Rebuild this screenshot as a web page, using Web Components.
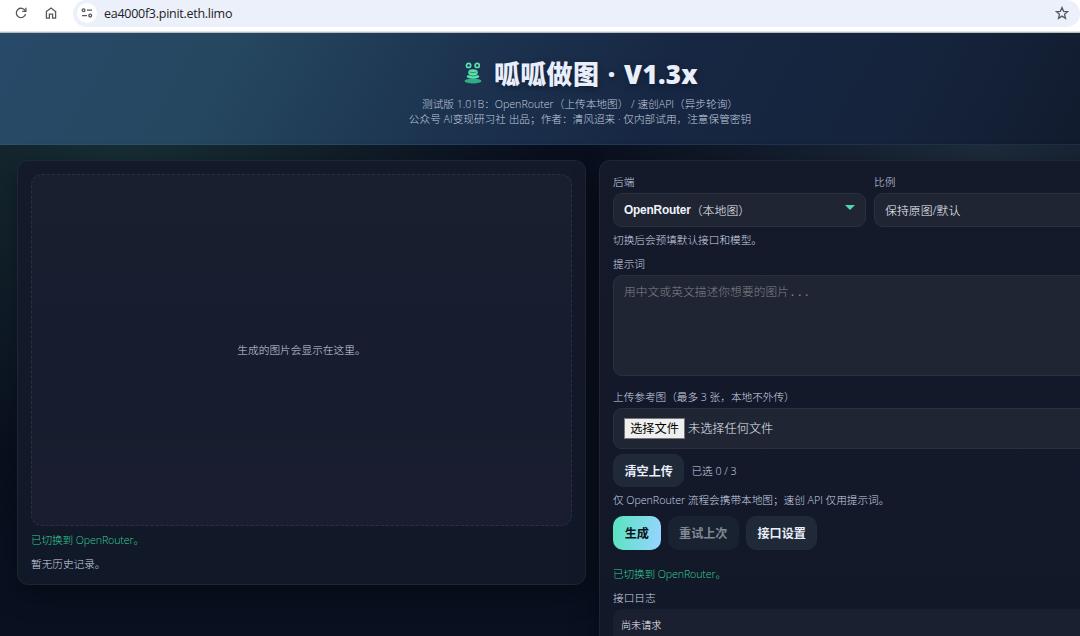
<!DOCTYPE html>
<html lang="zh-CN">
<head>
<meta charset="utf-8">
<title>呱呱做图 · V1.3x</title>
<style>
    html, body {
        margin: 0;
        height: 100%;
        overflow: hidden;
    }
    body {
        display: flex;
        flex-direction: column;
        font-family: "Open Sans", "Noto Sans CJK SC", sans-serif;
        font-size: 10.7px;
        color: #e6edf9;
        background: #080e1c;
    }
    .page {
        flex: 1;
        min-height: 0;
        width: 1160px;
        background:
            radial-gradient(420px 320px at 125px 112px, #172e34 0%, rgba(23, 46, 52, 0) 100%),
            radial-gradient(400px 300px at 985px 112px, #1d2b3b 0%, rgba(29, 43, 59, 0) 100%),
            linear-gradient(180deg, #0a0f1e 0%, #091020 100%);
    }
    main {
        display: grid;
        grid-template-columns: 569px 544px;
        gap: 13px;
        align-items: start;
        padding: 15px 17px;
    }
    .backends {
        display: grid;
        grid-template-columns: 253px 253px;
        gap: 8px;
    }
    .row {
        display: flex;
        align-items: center;
        gap: 7px;
    }
</style>
</head>
<body>
<browser-bar>ea4000f3.pinit.eth.limo</browser-bar>
<div class="page">
    <app-header>
        <span slot="title">呱呱做图 · V1.3x</span>
        <span slot="line1">测试版 1.01B：OpenRouter（上传本地图） / 速创API（异步轮询）</span>
        <span slot="line2">公众号 AI变现研习社 出品；作者：清风迢来 · 仅内部试用，注意保管密钥</span>
    </app-header>
    <main>
        <app-card style="height: 425px">
            <preview-box>生成的图片会显示在这里。</preview-box>
            <text-line tone="ok" style="margin-top: 6px">已切换到 OpenRouter。</text-line>
            <text-line style="margin-top: 8px">暂无历史记录。</text-line>
        </app-card>
        <app-card style="height: 560px">
            <div class="backends">
                <form-field label="后端"><select-box arrow><b>OpenRouter</b>（本地图）</select-box></form-field>
                <form-field label="比例"><select-box>保持原图/默认</select-box></form-field>
            </div>
            <text-line style="margin-top: 5px">切换后会预填默认接口和模型。</text-line>
            <form-field label="提示词" style="margin-top: 8px"><prompt-area>用中文或英文描述你想要的图片...</prompt-area></form-field>
            <form-field label="上传参考图（最多 3 张，本地不外传）" style="margin-top: 13px"><file-picker button="选择文件">未选择任何文件</file-picker></form-field>
            <div class="row" style="margin-top: 5px">
                <app-button style="height: 33px">清空上传</app-button>
                <text-line>已选 0 / 3</text-line>
            </div>
            <text-line style="margin-top: 5px">仅 OpenRouter 流程会携带本地图；速创 API 仅用提示词。</text-line>
            <div class="row" style="margin-top: 8px">
                <app-button kind="primary">生成</app-button>
                <app-button kind="disabled">重试上次</app-button>
                <app-button>接口设置</app-button>
            </div>
            <text-line tone="ok" style="margin-top: 16px">已切换到 OpenRouter。</text-line>
            <form-field label="接口日志" style="margin-top: 8px"><log-box>尚未请求</log-box></form-field>
        </app-card>
    </main>
</div>

<script>
// small helper: every element is a style block plus some markup
function define(name, render) {
    customElements.define(name, class extends HTMLElement {
        constructor() {
            super();
            this.attachShadow({ mode: 'open' });
        }
        connectedCallback() {
            this.shadowRoot.innerHTML = render(this);
        }
    });
}

// browser toolbar
define('browser-bar', () => `
    <style>
        :host {
            display: block;
            flex: none;
            box-sizing: border-box;
            height: 33px;
            background: white;
            border-bottom: 1px solid #b9bcbd;
            box-shadow: inset 0 -1px #e4e5e4;
            color: #1f2124;
        }
        .bar { display: flex; align-items: center; height: 27px; }
        svg { display: block; fill: none; stroke: #55585c; stroke-width: 1.3; }
        .reload { margin: 0 0 2px 14px; }
        .home { margin: 0 0 2px 16px; }
        .address {
            flex: 1;
            display: flex;
            align-items: center;
            box-sizing: border-box;
            height: 27px;
            margin-left: 15px;
            padding: 0 11px 1px 4px;
            border-radius: 14px;
            background: #ecf0fa;
        }
        .site {
            display: grid;
            place-items: center;
            width: 20px;
            height: 20px;
            border-radius: 50%;
            background: white;
        }
        .url { flex: 1; margin-left: 7px; font-size: 12.5px; letter-spacing: -0.27px; }
    </style>
    <div class="bar">
        <svg class="reload" width="14" height="14" viewBox="0 0 14 14"><path d="M11.3 5A4.7 4.7 0 1 0 11.6 8"/><path d="M11.9 1.8v3.6H8.2"/></svg>
        <svg class="home" width="14" height="14" viewBox="0 0 14 14"><path d="M2.4 5.6 7 2l4.6 3.6v6.6H8.6V8.2H5.4v4H2.4z"/></svg>
        <div class="address">
            <div class="site">
                <svg width="12" height="12" viewBox="0 0 12 12"><circle cx="2.6" cy="3.2" r="1.4"/><path d="M6 3.2h5M1 8.6h5"/><circle cx="9.2" cy="8.6" r="1.4"/></svg>
            </div>
            <span class="url"><slot></slot></span>
            <svg width="14" height="14" viewBox="0 0 14 14"><path d="M7 1.6l1.6 3.7 4 .35-3.05 2.65.95 3.95L7 10.1l-3.5 2.15.95-3.95L1.4 5.65l4-.35z"/></svg>
        </div>
    </div>
`);

// page header with the frog
define('app-header', () => `
    <style>
        :host {
            display: flex;
            flex-direction: column;
            align-items: center;
            box-sizing: border-box;
            height: 112px;
            padding-top: 22px;
            border-bottom: 1px solid rgba(70, 110, 145, .2);
            background: linear-gradient(118deg, #284a69 0%, #25475f 20%, #1c3350 40%, #172743 57%, #15233b 78%, #111a2c 96%);
            color: #c0cddf;
            font-weight: 300;
        }
        .title {
            display: flex;
            align-items: center;
            height: 35px;
            gap: 12px;
            padding-left: 2px;
            font-size: 26px;
            font-weight: 800;
            letter-spacing: .3px;
            word-spacing: 1.5px;
            color: #e8eefb;
            text-shadow: 0 2px 6px rgba(0, 0, 0, .35);
        }
        .title svg { margin-top: 1px; }
        .line { height: 15.5px; line-height: 15.5px; letter-spacing: -.03px; white-space: nowrap; }
        .first { margin-top: 6.5px; }
    </style>
    <div class="title">
        <svg width="18" height="22" viewBox="0 0 18 22">
            <ellipse cx="9" cy="19" rx="8.5" ry="2.4" fill="#2fae84"/>
            <ellipse cx="9" cy="14.4" rx="6.2" ry="2.3" fill="#5be0b0"/>
            <ellipse cx="9" cy="10.4" rx="4.8" ry="3.1" fill="#5be0b0"/>
            <path d="M5.5 10q3.5 1.4 7 0M3.8 12.9q5.2 2.4 10.4 0" fill="none" stroke="#185548" stroke-width=".6"/>
            <circle cx="4.6" cy="3.4" r="2.1" fill="#153a46" stroke="#5be0b0" stroke-width="1.7"/>
            <circle cx="13.2" cy="3.4" r="2.1" fill="#153a46" stroke="#5be0b0" stroke-width="1.7"/>
        </svg>
        <slot name="title"></slot>
    </div>
    <div class="line first"><slot name="line1"></slot></div>
    <div class="line"><slot name="line2"></slot></div>
`);

define('app-card', () => `
    <style>
        :host {
            display: block;
            box-sizing: border-box;
            padding: 13px;
            border: 1px solid #1e2636;
            border-radius: 11px;
            background: linear-gradient(180deg, #151a2b, #111828);
            box-shadow: 0 9px 27px rgba(0, 0, 0, .35);
        }
    </style>
    <slot></slot>
`);

define('preview-box', () => `
    <style>
        :host {
            display: grid;
            place-items: center;
            box-sizing: border-box;
            height: 352px;
            padding-bottom: 1px;
            border: 1px dashed #2a3041;
            border-radius: 11px;
            background: linear-gradient(180deg, #1a1f30, #171d2e 50%, #191d2f);
            color: #ccd5e4;
            font-weight: 300;
        }
    </style>
    <slot></slot>
`);

// one line of muted text, tone="ok" for the green status
define('text-line', () => `
    <style>
        :host {
            display: block;
            height: 16px;
            line-height: 16px;
            color: #ccd5e4;
            font-weight: 300;
            letter-spacing: -.05px;
            white-space: nowrap;
        }
        :host([tone="ok"]) { color: #34cc94; letter-spacing: -.15px; }
    </style>
    <slot></slot>
`);

define('form-field', el => `
    <style>
        :host { display: block; }
        text-line { margin-bottom: 3px; }
    </style>
    <text-line>${el.getAttribute('label')}</text-line>
    <slot></slot>
`);

define('select-box', el => `
    <style>
        :host {
            display: flex;
            align-items: center;
            box-sizing: border-box;
            height: 34px;
            padding: 0 10px 1px;
            border: 1px solid #2a303e;
            border-radius: 9px;
            background: #202533;
            font-size: 11.9px;
            font-weight: 300;
            color: #eef3fc;
        }
        ::slotted(b) {
            font-family: "Liberation Sans", sans-serif;
            font-size: 11.9px;
            font-weight: 600;
            letter-spacing: -.2px;
        }
        svg { margin: 0 0 5px auto; }
    </style>
    <slot></slot>
    ${el.hasAttribute('arrow') ? '<svg width="10" height="5" viewBox="0 0 10 5"><path d="M0 0h10L5 5z" fill="#53d6b0"/></svg>' : ''}
`);

define('prompt-area', () => `
    <style>
        :host {
            display: block;
            box-sizing: border-box;
            height: 101px;
            padding: 9px 10px;
            border: 1px solid #2a303e;
            border-radius: 9px;
            background: #202533;
            font-family: "Liberation Mono", "Noto Sans CJK SC", monospace;
            font-size: 11.7px;
            line-height: 16px;
            font-weight: 300;
            color: #80848c;
            letter-spacing: .1px;
        }
    </style>
    <slot></slot>
`);

define('file-picker', el => `
    <style>
        :host {
            display: flex;
            align-items: center;
            gap: 3px;
            box-sizing: border-box;
            height: 41px;
            padding: 0 10px 1px;
            border: 1px solid #2a303e;
            border-radius: 9px;
            background: #202533;
            font-size: 12.2px;
            font-weight: 300;
            color: #e6ecf7;
        }
        .choose {
            display: grid;
            place-items: center;
            box-sizing: border-box;
            width: 61px;
            height: 21px;
            border: 1px solid #777;
            background: #efefef;
            color: #000;
            font-weight: 400;
        }
    </style>
    <span class="choose">${el.getAttribute('button')}</span>
    <slot></slot>
`);

define('app-button', () => `
    <style>
        :host {
            display: grid;
            place-items: center;
            box-sizing: border-box;
            height: 34px;
            padding: 0 10.5px;
            border: 1px solid #222b38;
            border-radius: 10px;
            background: #202938;
            font-size: 12.1px;
            font-weight: 700;
            color: #e8eefb;
        }
        :host([kind="primary"]) {
            padding: 0 11.7px;
            border: 0;
            background: linear-gradient(100deg, #5de3c3 10%, #93d5fb 90%);
            color: #0b1220;
        }
        :host([kind="disabled"]) {
            background: #192230;
            border-color: #192230;
            color: #818894;
        }
    </style>
    <slot></slot>
`);

define('log-box', () => `
    <style>
        :host {
            display: block;
            box-sizing: border-box;
            height: 90px;
            padding: 8px;
            border-radius: 9px;
            background: #1b2031;
            font-size: 10.1px;
            line-height: 16px;
            font-weight: 300;
            color: #eef3fc;
        }
    </style>
    <slot></slot>
`);
</script>
</body>
</html>
